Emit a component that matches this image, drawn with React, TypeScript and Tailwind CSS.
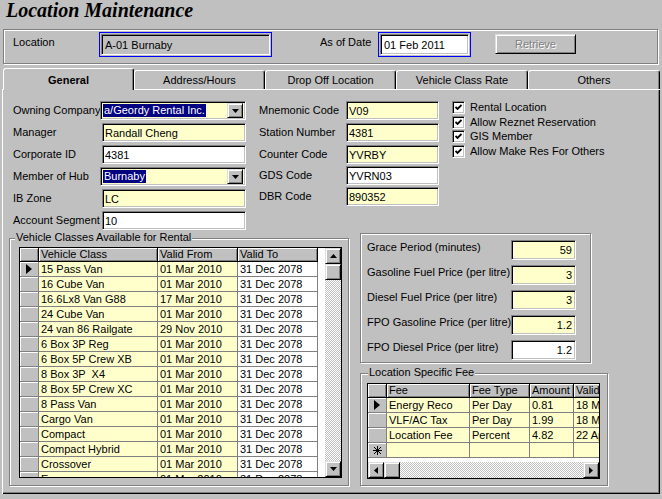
import React from "react";

const sunken =
  "border border-t-[#808080] border-l-[#808080] border-r-white border-b-white shadow-[inset_1px_1px_0_#000,inset_-1px_-1px_0_#c0c0c0]";
const raised =
  "bg-[#c0c0c0] border border-t-[#dfdfdf] border-l-[#dfdfdf] border-r-black border-b-black shadow-[inset_1px_1px_0_#fff,inset_-1px_-1px_0_#808080]";
const etched = "border border-[#808080] shadow-[inset_1px_1px_0_#fff,1px_1px_0_#fff]";
const dither =
  "bg-[image:repeating-conic-gradient(#ffffff_0%_25%,#c0c0c0_0%_50%)] bg-[length:2px_2px]";

function Tri({ dir }: { dir: "up" | "down" | "left" | "right" }) {
  const vert = dir === "up" || dir === "down";
  const w = vert ? 7 : 4;
  const h = vert ? 4 : 7;
  const pts = {
    up: "0,4 7,4 3.5,0",
    down: "0,0 7,0 3.5,4",
    left: "4,0 4,7 0,3.5",
    right: "0,0 0,7 4,3.5",
  }[dir];
  return (
    <svg width={w} height={h} viewBox={`0 0 ${w} ${h}`}>
      <polygon points={pts} fill="#000" />
    </svg>
  );
}

function RowMark() {
  return (
    <svg width="7" height="10" viewBox="0 0 7 10">
      <polygon points="0,0 0,10 6,5" fill="#000" />
    </svg>
  );
}

function Star() {
  return (
    <svg width="9" height="9" viewBox="0 0 9 9" stroke="#000" strokeWidth="1" shapeRendering="crispEdges">
      <line x1="4.5" y1="0" x2="4.5" y2="9" />
      <line x1="0" y1="4.5" x2="9" y2="4.5" />
      <line x1="1" y1="1" x2="8" y2="8" />
      <line x1="8" y1="1" x2="1" y2="8" />
    </svg>
  );
}

function DropBtn() {
  return (
    <div className={`${raised} w-[16px] h-[15px] flex items-center justify-center`}>
      <Tri dir="down" />
    </div>
  );
}

function Field({
  className,
  children,
  right,
}: {
  className: string;
  children?: React.ReactNode;
  right?: boolean;
}) {
  return (
    <div
      className={`${sunken} ${className} flex items-center pt-[1px] whitespace-nowrap overflow-hidden ${
        right ? "justify-end pr-[3px]" : "pl-[2px]"
      }`}
    >
      {children}
    </div>
  );
}

function Combo({ value }: { value: string }) {
  return (
    <div className={`${sunken} bg-[#ffffcc] -ml-[2px] w-[146px] h-[19px] flex items-center pl-[2px] pr-[2px]`}>
      <span className="bg-[#000080] text-white px-[1px] leading-[13px] whitespace-nowrap">{value}</span>
      <div className="ml-auto">
        <DropBtn />
      </div>
    </div>
  );
}

function FormRow({ label, children, lw, mt }: { label: string; children: React.ReactNode; lw: string; mt: string }) {
  return (
    <div className={`flex items-center h-[19px] ${mt}`}>
      <div className={`${lw} whitespace-nowrap`}>{label}</div>
      {children}
    </div>
  );
}

function Check({ label, h }: { label: string; h: string }) {
  return (
    <div className={`flex items-start ${h}`}>
      <div className={`${sunken} w-[13px] h-[13px] bg-white flex items-center justify-center`}>
        <svg width="7" height="7" viewBox="0 0 7 7">
          <polyline points="0.5,3 2.5,5 6.5,1" fill="none" stroke="#000" strokeWidth="1.8" />
        </svg>
      </div>
      <div className="ml-[5px] leading-[13px] whitespace-nowrap">{label}</div>
    </div>
  );
}

const headCell =
  "h-full bg-[#c0c0c0] border-r border-b border-r-black border-b-black shadow-[inset_1px_1px_0_#fff,inset_-1px_-1px_0_#808080] pl-[2px] leading-[12px] overflow-hidden whitespace-nowrap";
const rowHead =
  "w-[19px] h-full bg-[#c0c0c0] border-r border-b border-r-[#808080] border-b-[#808080] shadow-[inset_1px_1px_0_#fff] flex items-center justify-center";
const cell =
  "h-full border-r border-b border-r-[#808080] border-b-[#808080] pl-[2px] pt-[1px] leading-[13px] overflow-hidden whitespace-pre";

const vehicles: [string, string][] = [
  ["15 Pass Van", "01 Mar 2010"],
  ["16 Cube Van", "01 Mar 2010"],
  ["16.6Lx8 Van G88", "17 Mar 2010"],
  ["24 Cube Van", "01 Mar 2010"],
  ["24 van 86 Railgate", "29 Nov 2010"],
  ["6 Box 3P Reg", "01 Mar 2010"],
  ["6 Box 5P Crew XB", "01 Mar 2010"],
  ["8 Box 3P  X4", "01 Mar 2010"],
  ["8 Box 5P Crew XC", "01 Mar 2010"],
  ["8 Pass Van", "01 Mar 2010"],
  ["Cargo Van", "01 Mar 2010"],
  ["Compact", "01 Mar 2010"],
  ["Compact Hybrid", "01 Mar 2010"],
  ["Crossover", "01 Mar 2010"],
  ["Economy", "01 Mar 2010"],
];

const fees: [string, string, string, string][] = [
  ["Energy Reco", "Per Day", "0.81", "18 Mar 2010"],
  ["VLF/AC Tax", "Per Day", "1.99", "18 Mar 2010"],
  ["Location Fee", "Percent", "4.82", "22 Apr 2010"],
];

const fuel: [string, string, boolean][] = [
  ["Grace Period (minutes)", "59", true],
  ["Gasoline Fuel Price (per litre)", "3", true],
  ["Diesel Fuel Price (per litre)", "3", true],
  ["FPO Gasoline Price (per litre)", "1.2", true],
  ["FPO Diesel Price (per litre)", "1.2", false],
];

export default function App() {
  return (
    <div className="w-[662px] h-[499px] bg-[#c0c0c0] overflow-hidden font-['Liberation_Sans',Arial,sans-serif] text-[11px] leading-[13px] text-black">
      {/* Title */}
      <div className="h-[29px] pl-[6px] font-['Liberation_Serif','Times_New_Roman',serif] font-bold italic text-[20px] leading-[20px]">
        Location Maintenance
      </div>

      {/* Header group */}
      <div className={`${etched} ml-[3px] w-[655px] h-[35px] flex items-start`}>
        <div className="ml-[9px] mt-[6px] w-[86px]">Location</div>
        <div className="mt-[2px] w-[173px] h-[25px] border border-[#0000ff] p-[1px]">
          <div className={`${sunken} h-full bg-[#c0c0c0] flex items-center pl-[3px] pt-[1px]`}>A-01 Burnaby</div>
        </div>
        <div className="ml-[48px] mt-[6px] w-[58px] whitespace-nowrap">As of Date</div>
        <div className="mt-[2px] w-[93px] h-[25px] border border-[#0000ff] p-[1px]">
          <div className={`${sunken} h-full bg-white flex items-center pl-[3px] pt-[1px]`}>01 Feb 2011</div>
        </div>
        <div
          className={`${raised} ml-[24px] mt-[4px] w-[81px] h-[20px] flex items-center justify-center text-[#808080] [text-shadow:1px_1px_0_#fff]`}
        >
          Retrieve
        </div>
      </div>

      {/* Tabs */}
      <div className="mt-[4px] h-[21px] pl-[3px] flex items-end">
        <div className="relative z-10 w-[131px] h-[22px] -mb-[1px] bg-[#c0c0c0] border-t border-l border-t-white border-l-white border-r border-r-black rounded-t-[3px] shadow-[inset_-1px_0_0_#808080] flex items-center justify-center pt-[2px] font-bold">
          General
        </div>
        <div className="w-[131px] h-[19px] border-t border-l border-t-white border-l-white border-r border-r-black rounded-t-[3px] shadow-[inset_-1px_0_0_#808080] flex items-center justify-center pt-[1px]">
          Address/Hours
        </div>
        <div className="w-[131px] h-[19px] border-t border-l border-t-white border-l-white border-r border-r-black rounded-t-[3px] shadow-[inset_-1px_0_0_#808080] flex items-center justify-center pt-[1px]">
          Drop Off Location
        </div>
        <div className="w-[132px] h-[19px] border-t border-l border-t-white border-l-white border-r border-r-black rounded-t-[3px] shadow-[inset_-1px_0_0_#808080] flex items-center justify-center pt-[1px]">
          Vehicle Class Rate
        </div>
        <div className="w-[132px] h-[19px] border-t border-l border-t-white border-l-white border-r border-r-black rounded-t-[3px] shadow-[inset_-1px_0_0_#808080] flex items-center justify-center pt-[1px]">
          Others
        </div>
      </div>

      {/* Panel */}
      <div className="ml-[2px] w-[658px] h-[405px] shadow-[inset_1px_1px_0_#fff,inset_-1px_-1px_0_#000,inset_-2px_-2px_0_#808080]">
        {/* Top section */}
        <div className="h-[144px] pt-[12px] pl-[11px] flex items-start">
          {/* Left form */}
          <div className="w-[233px] flex flex-col">
            <FormRow label="Owning Company" lw="w-[89px]" mt="">
              <Combo value="a/Geordy Rental Inc." />
            </FormRow>
            <FormRow label="Manager" lw="w-[89px]" mt="mt-[3px]">
              <Field className="w-[144px] h-[19px] bg-[#ffffcc]">Randall Cheng</Field>
            </FormRow>
            <FormRow label="Corporate ID" lw="w-[89px]" mt="mt-[3px]">
              <Field className="w-[144px] h-[19px] bg-white">4381</Field>
            </FormRow>
            <FormRow label="Member of Hub" lw="w-[89px]" mt="mt-[3px]">
              <Combo value="Burnaby" />
            </FormRow>
            <FormRow label="IB Zone" lw="w-[89px]" mt="mt-[3px]">
              <Field className="w-[144px] h-[19px] bg-[#ffffcc]">LC</Field>
            </FormRow>
            <FormRow label="Account Segment" lw="w-[89px]" mt="mt-[3px]">
              <Field className="w-[144px] h-[19px] bg-white">10</Field>
            </FormRow>
          </div>

          {/* Middle form */}
          <div className="ml-[13px] w-[180px] flex flex-col">
            <FormRow label="Mnemonic Code" lw="w-[87px]" mt="">
              <Field className="w-[93px] h-[19px] bg-[#ffffcc]">V09</Field>
            </FormRow>
            <FormRow label="Station Number" lw="w-[87px]" mt="mt-[3px]">
              <Field className="w-[93px] h-[19px] bg-[#ffffcc]">4381</Field>
            </FormRow>
            <FormRow label="Counter Code" lw="w-[87px]" mt="mt-[3px]">
              <Field className="w-[93px] h-[19px] bg-[#ffffcc]">YVRBY</Field>
            </FormRow>
            <FormRow label="GDS Code" lw="w-[87px]" mt="mt-[2px]">
              <Field className="w-[93px] h-[19px] bg-white">YVRN03</Field>
            </FormRow>
            <FormRow label="DBR Code" lw="w-[87px]" mt="mt-[2px]">
              <Field className="w-[93px] h-[19px] bg-[#ffffcc]">890352</Field>
            </FormRow>
          </div>

          {/* Checkboxes */}
          <div className="ml-[13px] flex flex-col">
            <Check label="Rental Location" h="h-[15px]" />
            <Check label="Allow Reznet Reservation" h="h-[14px]" />
            <Check label="GIS Member" h="h-[15px]" />
            <Check label="Allow Make Res For Others" h="h-[15px]" />
          </div>
        </div>

        {/* Bottom section */}
        <div className="pl-[7px] flex items-start">
          {/* Vehicle classes group */}
          <div className={`${etched} relative mt-[5px] w-[340px] h-[248px]`}>
            <div className="absolute left-[5px] top-[-8px] px-[1px] bg-[#c0c0c0] whitespace-nowrap leading-[13px]">
              Vehicle Classes Available for Rental
            </div>
            <div className="ml-[9px] mt-[8px] w-[323px] h-[231px] border border-black bg-white flex">
              <div className="w-[298px] h-full overflow-hidden flex flex-col">
                <div className="flex h-[14px] shrink-0">
                  <div className={`${headCell} w-[19px]`} />
                  <div className={`${headCell} w-[119px]`}>Vehicle Class</div>
                  <div className={`${headCell} w-[80px]`}>Valid From</div>
                  <div className={`${headCell} w-[80px]`}>Valid To</div>
                </div>
                {vehicles.map(([name, from], i) => (
                  <div key={name} className="flex h-[15px] shrink-0">
                    <div className={rowHead}>{i === 0 ? <RowMark /> : null}</div>
                    <div className={`${cell} w-[119px] bg-[#ffffcc]`}>{name}</div>
                    <div className={`${cell} w-[80px] bg-[#ffffcc]`}>{from}</div>
                    <div className={`${cell} w-[80px] bg-white`}>31 Dec 2078</div>
                  </div>
                ))}
              </div>
              <div className="w-[7px]" />
              <div className="w-[16px] h-full flex flex-col">
                <div className={`${raised} h-[16px] shrink-0 flex items-center justify-center`}>
                  <Tri dir="up" />
                </div>
                <div className={`${raised} h-[16px] shrink-0`} />
                <div className={`${dither} flex-1`} />
                <div className={`${raised} h-[16px] shrink-0 flex items-center justify-center`}>
                  <Tri dir="down" />
                </div>
              </div>
            </div>
          </div>

          {/* Right column */}
          <div className="ml-[11px] flex flex-col">
            <div className={`${etched} w-[231px] h-[130px] pt-[6px] pl-[6px] flex flex-col gap-[5px]`}>
              {fuel.map(([label, val, yellow]) => (
                <div key={label} className="flex items-start h-[20px]">
                  <div className="w-[144px] pt-[1px] whitespace-nowrap">{label}</div>
                  <Field className={`w-[65px] h-[20px] ${yellow ? "bg-[#ffffcc]" : "bg-white"}`} right>
                    {val}
                  </Field>
                </div>
              ))}
            </div>

            <div className={`${etched} relative mt-[10px] w-[248px] h-[113px]`}>
              <div className="absolute left-[7px] top-[-8px] px-[1px] bg-[#c0c0c0] whitespace-nowrap leading-[13px]">
                Location Specific Fee
              </div>
              <div className="ml-[6px] mt-[9px] w-[233px] h-[96px] border border-black bg-white flex flex-col">
                <div className="h-[74px] overflow-hidden flex flex-col">
                  <div className="flex h-[14px] shrink-0">
                    <div className={`${headCell} w-[19px] shrink-0`} />
                    <div className={`${headCell} w-[83px] shrink-0`}>Fee</div>
                    <div className={`${headCell} w-[60px] shrink-0`}>Fee Type</div>
                    <div className={`${headCell} w-[44px] shrink-0`}>Amount</div>
                    <div className={`${headCell} w-[40px] shrink-0`}>Valid From</div>
                  </div>
                  {fees.map(([f, t, a, v], i) => (
                    <div key={f} className="flex h-[15px] shrink-0">
                      <div className={`${rowHead} shrink-0`}>{i === 0 ? <RowMark /> : null}</div>
                      <div className={`${cell} w-[83px] shrink-0 bg-[#ffffcc]`}>{f}</div>
                      <div className={`${cell} w-[60px] shrink-0 bg-[#ffffcc]`}>{t}</div>
                      <div className={`${cell} w-[44px] shrink-0 bg-[#ffffcc]`}>{a}</div>
                      <div className={`${cell} w-[40px] shrink-0 bg-[#ffffcc]`}>{v}</div>
                    </div>
                  ))}
                  <div className="flex h-[15px] shrink-0">
                    <div className={`${rowHead} shrink-0`}>
                      <Star />
                    </div>
                    <div className={`${cell} w-[83px] shrink-0 bg-[#ffffcc]`} />
                    <div className={`${cell} w-[60px] shrink-0 bg-[#ffffcc]`} />
                    <div className={`${cell} w-[44px] shrink-0 bg-[#ffffcc]`} />
                    <div className={`${cell} w-[40px] shrink-0 bg-[#ffffcc]`} />
                  </div>
                </div>
                <div className="h-[4px]" />
                <div className="h-[16px] flex">
                  <div className={`${raised} w-[16px] shrink-0 flex items-center justify-center`}>
                    <Tri dir="left" />
                  </div>
                  <div className={`${raised} w-[16px] shrink-0`} />
                  <div className={`${dither} flex-1`} />
                  <div className={`${raised} w-[16px] shrink-0 flex items-center justify-center`}>
                    <Tri dir="right" />
                  </div>
                </div>
              </div>
            </div>
          </div>
        </div>
      </div>
    </div>
  );
}
